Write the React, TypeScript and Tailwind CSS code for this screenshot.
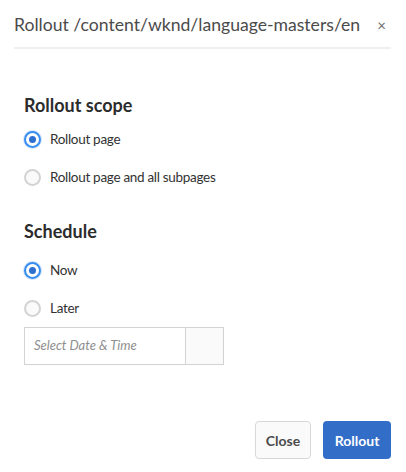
import React from 'react'

function Radio({ label, checked }: { label: string; checked?: boolean }) {
  return (
    <label className="flex items-center h-[38px]">
      <span
        className={
          checked
            ? 'w-[17px] h-[17px] rounded-full border-2 border-[#378ef0] bg-white flex items-center justify-center shadow-[0_0_0_1px_#d5e5fb]'
            : 'w-[17px] h-[17px] rounded-full border-2 border-[#d3d3d3] bg-[#fafafa]'
        }
      >
        {checked && <span className="w-[7px] h-[7px] rounded-full bg-[#2d6fcf]" />}
      </span>
      <span className="ml-[9px] text-[13.5px] tracking-[-0.3px] text-[#323232]">{label}</span>
    </label>
  )
}

export default function App() {
  return (
    <div className="w-[406px] h-[472px] bg-white font-['Lato',sans-serif] relative">
      <div className="flex items-center justify-between px-[14px] pt-[13px] pb-[10px]">
        <h1 className="whitespace-nowrap text-[17.6px] text-[#4b4b4b] leading-[24px]">
          Rollout /content/wknd/language-masters/en
        </h1>
        <button className="text-[#6e6e6e] text-[15px] leading-none mr-[6px]">×</button>
      </div>
      <div className="mx-[14px] w-[377px] h-[2px] bg-[#efefef]" />

      <div className="px-[24px]">
        <h2 className="mt-[44px] text-[18px] font-bold text-[#2c2c2c] leading-[24px]">Rollout scope</h2>
        <div className="mt-[3px] flex flex-col">
          <Radio label="Rollout page" checked />
          <Radio label="Rollout page and all subpages" />
        </div>

        <h2 className="mt-[23px] text-[18px] font-bold text-[#2c2c2c] leading-[24px]">Schedule</h2>
        <div className="mt-[8px] flex flex-col">
          <Radio label="Now" checked />
          <Radio label="Later" />
        </div>

        <div className="flex w-[200px] h-[38px] border border-[#d3d3d3]">
          <div className="flex-1 flex items-center px-[9px] text-[13px] italic text-[#8e8e8e] bg-white">
            Select Date &amp; Time
          </div>
          <div className="w-[38px] border-l border-[#d3d3d3] bg-[#fafafa]" />
        </div>
      </div>

      <div className="absolute right-[15px] bottom-[13px] flex gap-[12px]">
        <button className="w-[56px] h-[38px] rounded-[4px] border border-[#d8d8d8] bg-[#fafafa] text-[14px] font-bold text-[#4b4b4b]">
          Close
        </button>
        <button className="w-[68px] h-[38px] rounded-[4px] bg-[#326ec8] text-[14px] font-bold text-white">
          Rollout
        </button>
      </div>
    </div>
  )
}
